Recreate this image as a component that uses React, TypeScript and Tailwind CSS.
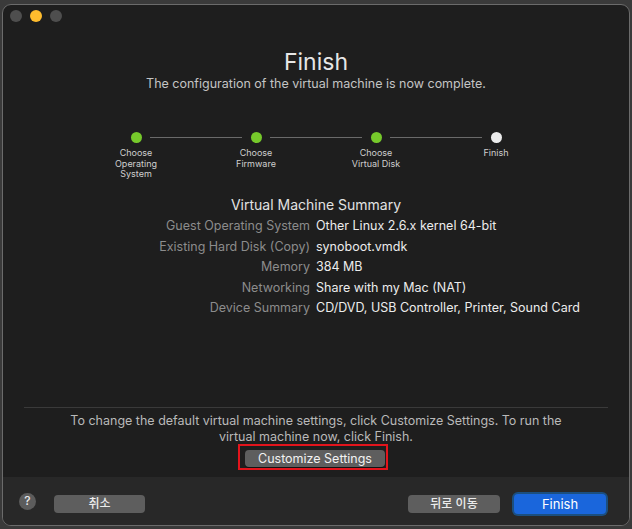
import React from 'react';

const steps = [
    { label: ['Choose', 'Operating', 'System'], done: true },
    { label: ['Choose', 'Firmware'], done: true },
    { label: ['Choose', 'Virtual Disk'], done: true },
    { label: ['Finish'], done: false },
];

const summary = [
    ['Guest Operating System', 'Other Linux 2.6.x kernel 64-bit'],
    ['Existing Hard Disk (Copy)', 'synoboot.vmdk'],
    ['Memory', '384 MB'],
    ['Networking', 'Share with my Mac (NAT)'],
    ['Device Summary', 'CD/DVD, USB Controller, Printer, Sound Card'],
];

function Stepper() {
    return (
        <div className="mt-[40px] flex justify-center">
            <div className="flex items-start">
                {steps.map((s, i) => (
                    <React.Fragment key={i}>
                        <div className="flex w-[28px] flex-col items-center">
                            <div className={`h-[11px] w-[11px] rounded-full ${s.done ? 'bg-[#76c92b]' : 'bg-[#ececec]'}`} />
                            <div className="mt-[5px] whitespace-nowrap text-center text-[9px] leading-[10.5px] text-[#cfcfcf]">
                                {s.label.map((l) => (
                                    <div key={l}>{l}</div>
                                ))}
                            </div>
                        </div>
                        {i < steps.length - 1 && <div className="mt-[5px] h-px w-[92px] bg-[#6a6a6a]" />}
                    </React.Fragment>
                ))}
            </div>
        </div>
    );
}

export default function App() {
    return (
        <div
            className="h-[529px] w-[632px] bg-[#3a3a3a] px-[2px] pb-[3px] pt-[4px]"
            style={{ fontFamily: 'Inter, "Noto Sans CJK KR", sans-serif' }}
        >
            <div className="flex h-full flex-col overflow-hidden rounded-[9px] border border-[#6b6b6b] bg-[#1e1e1e]">
                <div className="flex gap-[8px] pl-[7px] pt-[5px]">
                    <div className="h-[12px] w-[12px] rounded-full bg-[#4e4e4e]" />
                    <div className="h-[12px] w-[12px] rounded-full bg-[#febc2e]" />
                    <div className="h-[12px] w-[12px] rounded-full bg-[#4e4e4e]" />
                </div>

                <h1 className="mt-[26px] text-center text-[23px] leading-[28px] text-[#e6e6e6]">Finish</h1>
                <p className="text-center text-[12.5px] leading-[16px] text-[#c4c4c4]">
                    The configuration of the virtual machine is now complete.
                </p>

                <Stepper />

                <h2 className="mt-[16px] text-center text-[14px] leading-[18px] text-[#e2e2e2]">Virtual Machine Summary</h2>
                <div className="mt-[3px] flex flex-col">
                    {summary.map(([k, v]) => (
                        <div key={k} className="flex h-[20.5px] items-center text-[12.5px]">
                            <div className="w-[307px] shrink-0 text-right text-[#8c8c8c]">{k}</div>
                            <div className="ml-[6px] text-[#ececec]">{v}</div>
                        </div>
                    ))}
                </div>

                <div className="flex-1" />

                <div className="mx-[21px] h-px bg-[#3a3a3a]" />
                <p className="mt-[5px] px-[48px] text-center text-[12.5px] leading-[16px] text-[#b9b9b9]">
                    To change the default virtual machine settings, click Customize Settings. To run the virtual machine now, click Finish.
                </p>
                <div className="mt-[-1px] flex justify-center">
                    <div className="mr-[6px] border-2 border-[#e3141c] pb-[1px] pl-[5px] pr-[1px] pt-[4px]">
                        <button className="block h-[17px] w-[140px] rounded-[4px] bg-[#5e5e5e] text-[12.5px] leading-[17px] text-[#f2f2f2] shadow-[0_1px_0_rgba(0,0,0,0.4)]">
                            Customize Settings
                        </button>
                    </div>
                </div>

                <div className="mt-[7px] flex h-[48px] items-center bg-[#282828] pl-[16px] pr-[21px] pt-[6px]">
                    <div className="mb-[6px] flex h-[17px] w-[17px] items-center justify-center rounded-full bg-[#5c5c5c] text-[12px] font-medium text-[#e8e8e8]">?</div>
                    <button className="ml-[18px] h-[18px] w-[91px] rounded-[4px] bg-[#5e5e5e] text-[12px] font-medium leading-[18px] text-[#ececec]">취소</button>
                    <div className="flex-1" />
                    <button className="h-[18px] w-[92px] rounded-[4px] bg-[#5e5e5e] text-[12px] font-medium leading-[18px] text-[#ececec]">뒤로 이동</button>
                    <div className="ml-[12px] rounded-[6px] bg-[#1b4f80] p-[2px]">
                        <button className="block h-[20px] w-[92px] rounded-[4px] bg-[#1a66dc] text-[13px] leading-[20px] text-white">Finish</button>
                    </div>
                </div>
            </div>
        </div>
    );
}
